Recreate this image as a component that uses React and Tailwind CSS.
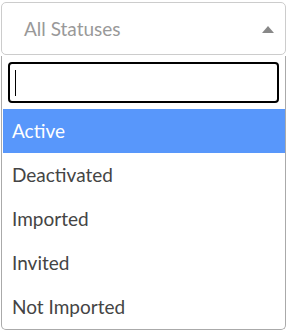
export default function App() {
  const items = ["Active", "Deactivated", "Imported", "Invited", "Not Imported"];
  return (
    <div className="w-[288px] h-[333px] bg-white pl-[1px] pt-[2px]" style={{ fontFamily: "Lato, 'Noto Sans', sans-serif" }}>
      <div className="w-[285px]">
        <div className="h-[53px] border border-[#cccccc] rounded-[5px] flex items-center pl-[22px] pr-[11px] bg-white">
          <span className="flex-1 text-[19px] text-[#999999] leading-none">All Statuses</span>
          <svg width="12" height="7" viewBox="0 0 12 7" className="mt-[1px]">
            <polygon points="0,7 12,7 6,0" fill="#888888" />
          </svg>
        </div>
        <div className="mt-[1px] border border-t-0 border-[#aaaaaa] rounded-b-[5px] bg-white pt-[6px]">
          <div className="px-[6px] pb-[6px]">
            <div className="h-[41px] border-2 border-black rounded-[4px] flex items-center pl-[5px]">
              <span className="w-[1px] h-[26px] bg-black" />
            </div>
          </div>
          <div className="pl-[1px]">
            {items.map((t, i) => (
              <div
                key={t}
                className={
                  i === 0
                    ? "h-[44px] flex items-center pl-[9px] bg-[#5897fb] text-white text-[19px]"
                    : "h-[44px] flex items-center pl-[9px] text-[#444444] text-[19px]"
                }
              >
                {t}
              </div>
            ))}
          </div>
        </div>
      </div>
    </div>
  );
}
